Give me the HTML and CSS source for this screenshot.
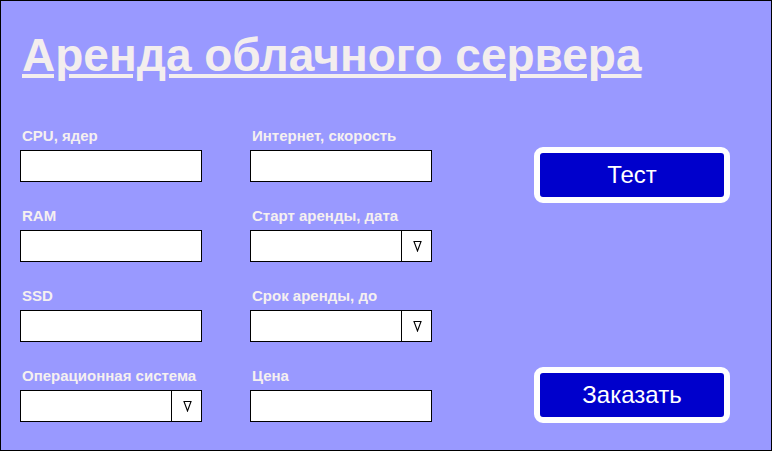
FILE: index.html
```html
<!DOCTYPE html>
<html lang="ru">
<head>
<meta charset="utf-8">
<title>Аренда облачного сервера</title>
<link rel="stylesheet" href="styles.css">
</head>
<body>
<div class="frame">
  <h1 class="title">Аренда облачного сервера</h1>
  <div class="content">
    <div class="fields">
      <div class="field"><label class="label">CPU, ядер</label><div class="input"></div></div>
      <div class="field"><label class="label">Интернет, скорость</label><div class="input"></div></div>
      <div class="field"><label class="label">RAM</label><div class="input"></div></div>
      <div class="field"><label class="label">Старт аренды, дата</label><div class="input select"><span class="select-value"></span><span class="select-arrow"><svg width="9" height="12" viewBox="0 0 9 12"><path d="M1 1.5 H8 L4.5 11 Z" fill="none" stroke="#000" stroke-width="1.1" stroke-linejoin="miter"/></svg></span></div></div>
      <div class="field"><label class="label">SSD</label><div class="input"></div></div>
      <div class="field"><label class="label">Срок аренды, до</label><div class="input select"><span class="select-value"></span><span class="select-arrow"><svg width="9" height="12" viewBox="0 0 9 12"><path d="M1 1.5 H8 L4.5 11 Z" fill="none" stroke="#000" stroke-width="1.1" stroke-linejoin="miter"/></svg></span></div></div>
      <div class="field"><label class="label">Операционная система</label><div class="input select"><span class="select-value"></span><span class="select-arrow"><svg width="9" height="12" viewBox="0 0 9 12"><path d="M1 1.5 H8 L4.5 11 Z" fill="none" stroke="#000" stroke-width="1.1" stroke-linejoin="miter"/></svg></span></div></div>
      <div class="field"><label class="label">Цена</label><div class="input"></div></div>
    </div>
    <div class="actions">
      <button class="btn btn-test">Тест</button>
      <button class="btn btn-order">Заказать</button>
    </div>
  </div>
</div>
</body>
</html>
```
FILE: styles.css
```css
* { box-sizing: border-box; }
html, body { margin: 0; padding: 0; }
body { font-family: "Liberation Sans", Arial, sans-serif; }
.frame {
  width: 772px;
  height: 451px;
  border: 1px solid #000;
  background: #9999ff;
  padding: 28px 0 0 21px;
}
.title {
  margin: 0;
  font-size: 46px;
  line-height: 52px;
  height: 52px;
  font-weight: bold;
  color: #f3eeee;
  text-decoration: underline;
  text-decoration-thickness: 4px;
  text-underline-offset: 3px;
}
.content {
  display: flex;
  margin-top: 46px;
}
.fields {
  display: grid;
  grid-template-columns: 182px 182px;
  grid-auto-rows: 55px;
  column-gap: 48px;
  row-gap: 25px;
  margin-left: -2px;
}
.field { display: flex; flex-direction: column; }
.label {
  display: block;
  height: 17px;
  font-size: 15px;
  line-height: 17px;
  font-weight: bold;
  color: #f5f0f0;
  margin: 0 0 6px 2px;
  white-space: nowrap;
}
.input {
  height: 32px;
  background: #fff;
  border: 1px solid #000;
}
.select { display: flex; }
.select-value { flex: 1; }
.select-arrow {
  width: 30px;
  border-left: 1px solid #000;
  display: flex;
  align-items: center;
  justify-content: center;
  padding-left: 1px;
}
.select-arrow svg { display: block; }
.actions {
  display: flex;
  flex-direction: column;
  margin-left: 102px;
}
.btn {
  width: 196px;
  height: 56px;
  border: 6px solid #fff;
  border-radius: 9px;
  background: #0000cc;
  color: #fff;
  font-family: "Liberation Sans", Arial, sans-serif;
  font-size: 24px;
  padding: 0;
}
.btn-test { margin-top: 20px; }
.btn-order { margin-top: 164px; }
```
